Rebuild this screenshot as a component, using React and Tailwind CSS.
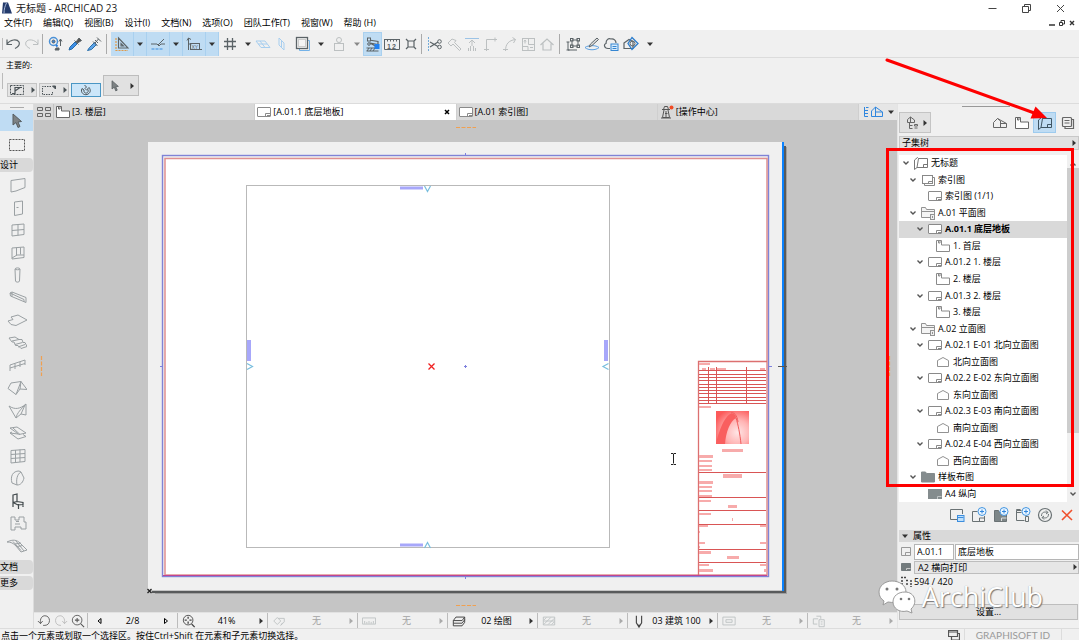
import React, { useState } from 'react';
import clsx from 'clsx';

const Svg = ({ className = 'w-4 h-4', box = '0 0 16 16', children }) => (
  <svg viewBox={box} className={clsx('shrink-0', className)} fill="none" stroke="currentColor" strokeWidth="1" aria-hidden="true">
    {children}
  </svg>
);

const Caret = ({ className = 'text-[#333]' }) => (
  <Svg className={clsx('w-2 h-2', className)} box="0 0 8 8"><path d="M1 2.5h6L4 6z" fill="currentColor" stroke="none" /></Svg>
);

const Play = ({ className = 'text-[#333]' }) => (
  <Svg className={clsx('w-2 h-2', className)} box="0 0 8 8"><path d="M2.5 1v6L6 4z" fill="currentColor" stroke="none" /></Svg>
);

const LayoutIcon = ({ className = 'text-[#8a8a8a]' }) => (
  <Svg className={clsx('w-3.5 h-3.5', className)} box="0 0 14 14">
    <rect x=".5" y="2.500" width="13" height="9" rx=".5" fill="#fff" />
    <path d="M8.500 11V8.500h5M10 10.500h3" />
  </Svg>
);

const StoryIcon = ({ className = 'text-[#8a8a8a]' }) => (
  <Svg className={clsx('w-3.5 h-3.5', className)} box="0 0 14 14">
    <path d="M.5 12.500V1.500h5V6h8v6.500z" fill="#fff" />
    <path d="M2.500 1.500v2.500h1.500V2" />
  </Svg>
);

const BookIcon = ({ className = 'text-[#777]' }) => (
  <Svg className={clsx('w-3.5 h-3.5', className)} box="0 0 14 14">
    <path d="M4.500 2.500h9v9H3M4.500 2.500L3.500 1.500.5 4v9.500l2.500-2L4.500 2.500M9.500 11V8.500h4" />
  </Svg>
);

const IndexIcon = () => (
  <Svg className="w-3.5 h-3.5 text-[#888]" box="0 0 14 14">
    <rect x="1.500" y="2.500" width="10" height="8" />
    <path d="M7.500 10V8.500h4M3.500 10.500V12.500h10V4.500h-2" />
  </Svg>
);

const FolderIcon = () => (
  <Svg className="w-3.5 h-3.5 text-[#929292]" box="0 0 14 14">
    <path d="M9 11.500H.5v-10h4l1 2h8V8" fill="#f4f4f4" />
    <path d="M.5 5.500h13" /><rect x="9.500" y="8.500" width="4" height="5" fill="#eee" /><path d="M11.500 10v2" />
  </Svg>
);

const ElevationIcon = () => (
  <Svg className="w-3.5 h-3.5 text-[#929292]" box="0 0 14 14"><path d="M1.500 11.500V5.500L7 2.500l5.500 3v6z" /></Svg>
);

const MasterFolderIcon = () => (
  <Svg className="w-3.5 h-3.5 text-[#848c8e]" box="0 0 14 14"><path d="M.5 12V2h4l1 1.500h8V12z" fill="currentColor" /></Svg>
);

const MasterIcon = () => (
  <Svg className="w-3.5 h-3.5 text-[#848c8e]" box="0 0 14 14">
    <rect x=".5" y="2.500" width="13" height="9" fill="currentColor" />
    <path d="M9.500 12V9.500h4" stroke="#c0c5c6" />
  </Svg>
);

const menus = ['文件(F)', '编辑(Q)', '视图(B)', '设计(I)', '文档(N)', '选项(O)', '团队工作(T)', '视窗(W)', '帮助 (H)'];

const toolIcons = {
  undo: <path d="M2 3.500v5h5M2 8c3-4.500 10-5.500 12-2 1.200 3-1 5-4 6.500" strokeWidth="1.200" />,
  redo: <path d="M14 3.500v5H9M14 8C11 3.500 4 2.500 2 6c-1.200 3 1 5 4 6.500" />,
  find: <><circle cx="5.500" cy="5.500" r="4" stroke="#4c91d6" strokeWidth="1.500" /><circle cx="5.500" cy="5.500" r="1.500" fill="#3686dc" /><path d="M8 9l1.500 1.500" stroke="#277bdc" strokeWidth="2" /><path d="M7 14h4v-2H8z" fill="currentColor" /><path d="M11 5.500L12.500 3 14 5.500M12.500 3v7" /></>,
  pick: <><path d="M2 14l1-3 5-5 2 2-5 5z" fill="#3f8fe6" stroke="#276da9" /><path d="M7.500 4.500l4 4M9 6l3-4 2.500 2.500L10.500 7z" fill="#555" /></>,
  inject: <><path d="M1.500 14.500l2-3 5-5 2 2-5 5z" fill="#5ea4e8" stroke="#276da9" /><path d="M7 5.500l4.500 4.500M9 7l3.500-4M11 1.500l4 4M9 4l3 3" /></>,
  grid: <path d="M5.500 2v12M10.500 2v12M2 5.500h12M2 10.500h12" strokeWidth="1.300" />,
  plane: <path d="M1 5h9l5 6.500H6zM3 8h9M5 5l5 6.500" stroke="#a7ceef" />,
  vplane: <path d="M5 2l5 5v7L5 9zM7.500 5v7" stroke="#a7ceef" />,
  page: <><path d="M4.500 4.500h10v10h-10z" stroke="#74b2e8" /><rect x="1.500" y="1.500" width="11" height="11" fill="#f4f4f4" strokeWidth="1.300" /><rect x="3.500" y="3.500" width="7" height="7" stroke="#ccc" /></>,
  lock: <><rect x="3.500" y="7.500" width="9" height="7" /><circle cx="8" cy="4" r="2.500" /><path d="M7 6.500v1M9 6.500v1" /></>,
  trace: <><path d="M4 4l9 1.500v3L5 7l7 4" strokeWidth="1.200" /><rect x="2.500" y="2" width="3" height="3" fill="#cce2f5" /><circle cx="4" cy="8" r="1.300" /><path d="M1.500 12h9M2 15l2-3M5 15l2-3M8 15l2-3M1.500 15h12" /><rect x="10" y="8.500" width="4" height="4" fill="#2180f0" stroke="#2180f0" /></>,
  ruler: <><path d="M.5 3v10.500h15V3M0 3.500h16M3.500 3v2.500M6.500 3v2.500M9.500 3v2.500M12.500 3v2.500" /><text x="3" y="12.500" fontSize="7" letterSpacing="1" fill="currentColor" stroke="none" fontFamily="Liberation Sans, sans-serif" fontWeight="700">12</text></>,
  cross: <path d="M5 5h6v6H5zM3 3l2.500 2.500M13 3l-2.500 2.500M3 13l2.500-2.500M13 13l-2.500-2.500" strokeWidth="1.200" />,
  scissors: <><circle cx="12.500" cy="5.500" r="1.800" /><circle cx="12.500" cy="11" r="1.800" /><path d="M3 6l8 4.500M3 11l8-5" strokeWidth="1.200" /><path d="M1.500 1v14" stroke="#75acd9" strokeDasharray="2 1" /></>,
  axe: <path d="M2 7l4-4 4 1.500-1.500 2L15 13l-1.500 1.500L7 8l-2 2z" />,
  adjust: <><path d="M1 2.500h14" stroke="#9cc3e6" /><path d="M8 4v6M5 7l3-3 3 3M4.500 12v3M6.500 10v5M9.500 10v5M11.500 12v3" /></>,
  corner: <path d="M1 13.500h5M3.500 15V3.500H14M12 1.500v4" />,
  fillet: <path d="M1 13.500h5M3.500 15c0-7 3-10.500 10-11.500M10.500 1.500l3 2-2 3.500" />,
  resize: <><rect x="2.500" y="2.500" width="12" height="12" /><path d="M8.500 3v5.500h6M3 10.500h5v4M5 4.500v3M4 5.500l1-1.500 1 1.500M10 11.500h3" /></>,
  house: <path d="M1.500 9L8 3l6.500 6M4 7.500V14h8V7.500" strokeWidth="1.200" />,
  group: <><path d="M3 6v8h9M7 4h6v6H7z" /><rect x="5.500" y="2.500" width="2.500" height="2.500" /><rect x="12" y="2.500" width="2.500" height="2.500" /><rect x="5.500" y="9" width="2.500" height="2.500" /><rect x="12" y="9" width="2.500" height="2.500" /><path d="M1.500 6h3M1.500 14h3" /></>,
  edit: <><path d="M1 11.500c3-2.500 11-2.500 14 0-3 3-11 3-14 0z" stroke="#5a9fe2" /><path d="M5 11l1.500-3 6.500-6 1.500 1.500L8 9.500z" fill="#ddd" /></>,
  cloud: <><path d="M7 12.500H5C1 12.500.5 8 3 7.500c0-4 2.500-5.500 5-4.500 3-.5 5 1.500 5 4" strokeWidth="1.200" /><rect x="8" y="8" width="7" height="6.500" fill="#d9ecfc" stroke="#3586d2" /><path d="M9.500 10.500h4M9.500 12.500h4" stroke="#3586d2" /></>,
  model: <><path d="M1 7l5-3.500 4 2v7H1z" strokeWidth="1.200" /><path d="M9 1.500l6 6-6 6-4-6z" stroke="#2c7dcc" strokeWidth="1.300" /><circle cx="9.500" cy="7.500" r="2.500" /></>,
  triangle: <><path d="M4.500 2v10h9.500zM7 7.500v2.500h2.500z" strokeWidth="1.100" /><path d="M2 2v12.500h12" stroke="#e09a48" strokeDasharray="2 1" strokeWidth="1.200" /></>,
  guide: <><path d="M1 8h6l2 2 2-2M8 9l6-6M11 8h4" /><path d="M1.500 13h12" stroke="#3c8de0" strokeDasharray="3 1" strokeWidth="1.200" /></>,
  coord: <><path d="M2.500 2v12M1 4.500L2.500 2 5 3.500" /><path d="M2.500 8h3" /><rect x="4.500" y="7.500" width="9" height="6" /><path d="M14 13.500h2" /><text x="5.500" y="12.500" fontSize="5" fill="currentColor" stroke="none" fontFamily="Liberation Sans, sans-serif">XY</text></>,
};

const ToolButton = ({ name, label, w = 'w-[19px]', dim, active }) => (
  <button aria-label={label || name} className={clsx('h-6 shrink-0 flex items-center justify-center', w, dim ? 'text-[#bcc0c1]' : 'text-[#5b6367]', active && 'bg-[#bfdcf3] outline outline-[#a9d0ef] -outline-offset-1')}>
    <Svg>{toolIcons[name]}</Svg>
  </button>
);

const CaretButton = ({ w, className }) => (
  <button aria-label="more" className={clsx('h-6 shrink-0 flex items-center justify-center', w)}><Caret className={className} /></button>
);

const Split = ({ name }) => (
  <div className="flex w-9 h-6 shrink-0 bg-[#bfdcf3] border-r border-[#a9d0ef]">
    <ToolButton name={name} w="w-[22px]" />
    <span className="w-px bg-[#a9d0ef]" />
    <CaretButton w="flex-1" />
  </div>
);

const Sep = () => <span className="w-px h-5 mx-px shrink-0 bg-[#aaa]" />;

const Toolbar = () => (
  <div className="flex items-center h-7 shrink-0 border-b border-[#dcdcdc] pl-0.5">
    <span className="w-px h-3 bg-[#bbb]" />
    <ToolButton name="undo" />
    <ToolButton name="redo" dim />
    <Sep />
    <div className="flex px-0.5">
      <ToolButton name="find" />
      <ToolButton name="pick" />
      <ToolButton name="inject" />
    </div>
    <Sep />
    <div className="flex pl-[3px]">
      <Split name="triangle" />
      <Split name="guide" />
      <Split name="coord" />
    </div>
    <ToolButton name="grid" w="w-[22px]" />
    <CaretButton w="w-[13px]" />
    <ToolButton name="plane" w="w-[18px]" dim />
    <ToolButton name="vplane" w="w-5" dim />
    <ToolButton name="page" w="w-[22px]" />
    <CaretButton w="w-3.5" />
    <ToolButton name="lock" w="w-[22px]" dim />
    <CaretButton w="w-[13px]" className="text-[#888]" />
    <ToolButton name="trace" active />
    <ToolButton name="ruler" />
    <ToolButton name="cross" />
    <Sep />
    <div className="flex px-0.5">
      <ToolButton name="scissors" />
      <ToolButton name="axe" dim />
      <ToolButton name="adjust" dim w="w-[18px]" />
      <ToolButton name="corner" dim />
      <ToolButton name="fillet" dim />
      <ToolButton name="resize" dim w="w-[18px]" />
      <ToolButton name="house" dim />
    </div>
    <Sep />
    <div className="flex pl-0.5">
      <ToolButton name="group" />
      <ToolButton name="edit" />
      <ToolButton name="cloud" />
      <ToolButton name="model" w="w-[22px]" />
      <CaretButton w="w-4" />
    </div>
  </div>
);

const ArrowCursor = ({ className }) => (
  <Svg className={className} box="0 0 12 16"><path d="M2 1v11l3-2.500 2 5 2-1-2-4.500 3.500-.5z" fill="#7d8284" stroke="#555c5f" /></Svg>
);

const InfoBox = () => (
  <div className="h-[46px] shrink-0 border-b border-[#dcdcdc] pl-0.5 text-[#4b5357]">
    <div className="pl-1 h-[13px] text-[8px] leading-[13px] text-black">主要的:</div>
    <div className="flex items-end gap-0.5 h-[26px]">
      <span className="w-px h-4 mb-2 mr-0.5 bg-[#bbb]" />
      <button aria-label="selection settings" className="flex items-center justify-center gap-1 w-[30px] h-3.5 bg-[#e4e4e4] border border-[#c4c4c4]">
        <Svg className="w-4 h-3" box="0 0 16 12"><rect x="1.500" y="1.500" width="13" height="9" strokeDasharray="2 1" /><path d="M3 9.500h3v-6h7M6 7l5-3.500" strokeWidth="1.200" /></Svg>
        <Play className="-mr-0.5" />
      </button>
      <button aria-label="marquee" className="flex items-center justify-center gap-1 w-[30px] h-3.5 bg-[#e4e4e4] border border-[#c4c4c4]">
        <Svg className="w-4 h-3" box="0 0 16 12"><path d="M10 2.500H1.500v8h10V7" strokeDasharray="1.500 1" /><path d="M11.500 2h3v3z" fill="currentColor" /></Svg>
        <Play className="-mr-0.5" />
      </button>
      <button aria-label="magnet" className="flex items-center justify-center w-[30px] h-3.5 bg-[#cce6f9] border border-[#4a96c4]">
        <Svg className="w-3 h-3" box="0 0 12 12"><path d="M4.500 1l2 2L5 4.500l2 2M2 4.500c-2 4 2 7 5 6s4.500-4 2-7L7.500 5c1.500 2 .5 3.500-1 4S3.500 8 4 6z" /></Svg>
      </button>
      <button aria-label="arrow tool" className="flex items-center justify-end gap-2 w-9 h-[21px] mb-px pr-0.5 bg-[#e1e1e1] border border-[#bdbdbd]">
        <ArrowCursor className="w-2.5 h-3" />
        <Play />
      </button>
    </div>
  </div>
);

// design tools, top to bottom
const designTools = [
  ['wall', <path d="M2 4.500l14-2v9l-9 3.500-5 1z" />],
  ['door', <path d="M5.500 3l8-1v13l-8 1.500zM7.500 8.500h2" />],
  ['window', <path d="M3 4l12-1v10.500l-12 1.500zM3 9.500l12-1M9 3.500v11" />],
  ['corner window', <path d="M3 4l12-1v10.500l-12 1.500zM3 14l5-3h7M7.500 3.500v8M11.500 3.500v7" />],
  ['column', <path d="M6 3c0-1.500 5-1.500 5 0l-.5 12c0 1.500-4 1.500-4 0zM6 3c0 1 5 1 5 0" />],
  ['beam', <path d="M1 4l2-1 14 5.500v5L1.500 7zM3 3v4.500M1 4l14 6.500v2.500" />],
  ['slab', <path d="M-1 10l5-1.500L2 6l7-2 9 5-11 5.500-5-1z" />],
  ['stair', <path d="M0 4l6-1 4 2.500h3l1 3h2l2 4-6 2-3-3H6.500L5 8H3zM3 7l7-1.500M6 10.500l7.500-2M9 13l7-2.500" />],
  ['railing', <path d="M1 8l15-5v5M1 8v6M1 11l15-4.500M6 6.500v5.500M11 5v5" />],
  ['roof', <path d="M2 4l10-1.500 6 8-7-.5-4 5.500-8-6zM7 15.500l5-13M12 2.500l-1 7.500" />],
  ['shell', <path d="M0 4c6 4 11 3 17-2v11l-5-1-5 4zM7 16c1-5 5-9 10-14M12 12l4-9" />],
  ['skylight', <path d="M1 4l7-1 9 6-7 1.500zM3 8l-2 1 8 6 8-2.500-3-2M4 4l7 6.500M1 9l8 1" />],
  ['curtain wall', <path d="M2 3.500l14-1v12L2 16zM6.500 3v12.500M11 2.500v12.500M2 7.500l14-1M2 11.500l14-1" />],
  ['morph', <path d="M10 2c-6 0-9 5-7 12l5 2c4 0 6-3 7-7l-3-6zM8 16C7 11 8 5 12 3" />],
];

const lowerTools = [
  ['object', true, <path d="M4 3l4-1v7.500L4 10.500zM4 10.500l4-1 6 1v2l-5 .5-5-2.500M4 10v5M14 12v3M9.500 12v5" strokeWidth="1.200" />],
  ['zone', false, <path d="M2 3h4v3h4V3h5v5h2v7h-5v-2H6v3H2zM6 10h5M7 7.500h3" />],
  ['mesh', false, <path d="M-2 5c6-3 10-2 13 1l7 7-6 2-5-6C4 6 2 5-2 5zM4 4.500l8 9M7 4l8 10M8 9.500l6-1M6 7l6-1" />],
];

const ToolHeader = ({ children }) => (
  <button className="block w-full h-3.5 shrink-0 text-left rounded-r-sm bg-[#d9d9d9]">{children}</button>
);

const Toolbox = () => (
  <div className="w-[34px] shrink-0 flex flex-col border-r border-[#dcdcdc] text-[#9aa0a3]">
    <div className="h-[6px] shrink-0 flex items-center justify-center"><span className="w-3.5 h-px bg-[#aaa]" /></div>
    <button aria-label="arrow" className="h-[21px] shrink-0 flex items-center justify-center bg-[#bfdcf3]"><ArrowCursor className="w-3 h-4" /></button>
    <button aria-label="marquee" className="h-[27px] shrink-0 flex items-center justify-center text-[#555]">
      <Svg className="w-4 h-3" box="0 0 16 12"><rect x=".5" y=".5" width="15" height="11" strokeDasharray="2 1" /></Svg>
    </button>
    <div className="text-black flex"><ToolHeader>设计</ToolHeader></div>
    <div className="flex flex-col h-[387px] shrink-0 py-0.5">
      {designTools.map(([name, art]) => (
        <button key={name} aria-label={name} className="flex-1 flex items-center justify-center"><Svg className="w-5 h-[18px]" box="-2 0 20 18">{art}</Svg></button>
      ))}
      {lowerTools.map(([name, dark, art]) => (
        <button key={name} aria-label={name} className={clsx('flex-1 flex items-center justify-center', dark && 'text-[#3f474a]')}><Svg className="w-5 h-[18px]" box="-2 0 20 18">{art}</Svg></button>
      ))}
    </div>
    <div className="flex flex-col gap-0.5 pt-px text-black">
      <ToolHeader>文档</ToolHeader>
      <ToolHeader>更多</ToolHeader>
    </div>
  </div>
);

const Tabs = () => {
  const tabs = [
    { text: '[3. 楼层]', icon: <StoryIcon className="text-[#666]" /> },
    { text: '[A.01.1 底层地板]', icon: <LayoutIcon />, active: true },
    { text: '[A.01 索引图]', icon: <LayoutIcon /> },
    {
      text: '[操作中心]',
      icon: (
        <Svg className="w-3.5 h-3.5 text-[#555]" box="0 0 14 14">
          <path d="M3.500 4.500L4.500 1.500h3l1 3M2 4.500h8M4 5L2.500 12.500h7L8 5M5 8.500h2.500M6 6v6M1 13h10" />
          <circle cx="11.500" cy="2.500" r="2" fill="#f04a23" stroke="none" />
        </Svg>
      ),
    },
  ];
  return (
    <div className="flex h-4 shrink-0 bg-[#d9d9d9]">
      <button aria-label="all tabs" className="w-5 flex items-center justify-center border-r border-[#c2c2c2] text-[#666]">
        <Svg className="w-3.5 h-3.5" box="0 0 14 14"><path d="M.5 2.500h5v3h-5zM8.500 2.500h5v3h-5zM.5 8.500h5v3h-5zM8.500 8.500h5v3h-5z" /></Svg>
      </button>
      {tabs.map(t => (
        <div key={t.text} className={clsx('flex-1 flex items-center border-r border-[#cfcfcf] pl-0.5 pr-1.5', t.active && 'bg-white')}>
          <button className="flex items-center gap-0.5">{t.icon}{t.text}</button>
          {t.active && <button aria-label="close tab" className="ml-auto"><Svg className="w-1.5 h-1.5" box="0 0 6 6"><path d="M1 1l4 4M5 1L1 5" strokeWidth="1.500" /></Svg></button>}
        </div>
      ))}
      <button aria-label="view map" className="w-[38px] flex items-center justify-between bg-[#e6e6e6] pl-1 pr-0.5 text-[#2f86de]">
        <Svg className="w-5 h-3.5" box="0 0 20 14"><path d="M1.500 2v9.500H5M1.500 5.500H5M1.500 8.500H5M3 2.500h2.500M8.500 11.500V6L12.500 2l7 5v4.500zM12.500 2v9.500M12.500 7h7" /></Svg>
        <Caret />
      </button>
    </div>
  );
};

const tableLines = [370, 374, 377, 380, 384, 387, 390, 393, 397, 400];
const blockLines = [403, 472, 497, 510, 524, 549, 562];
// [x, y, width, height]
const labels = [
  [699, 363, 11, 2], [702, 368, 4, 2], [710, 368, 5, 2], [717, 368, 9, 2], [760, 368, 5, 2],
  [699, 406, 12, 2], [722, 449, 21, 3], [699, 455, 14, 3], [699, 460, 13, 2], [699, 465, 13, 2], [699, 469, 13, 2],
  [723, 474, 19, 4], [699, 481, 14, 3], [699, 486, 13, 2], [699, 490, 13, 2], [699, 495, 13, 2],
  [699, 500, 12, 2], [728, 505, 9, 3], [699, 513, 12, 2], [732, 518, 1, 3], [699, 525, 9, 2], [760, 525, 6, 2],
  [699, 531, 1, 2], [699, 542, 6, 2], [760, 542, 6, 2], [699, 546, 1, 2], [699, 551, 12, 3], [727, 556, 12, 3],
  [699, 564, 10, 2], [760, 564, 6, 2], [699, 569, 14, 3], [764, 569, 2, 3],
];

const Drawing = () => (
  <svg viewBox="34 120 863 492" preserveAspectRatio="xMidYMid meet" className="block w-full h-full" fill="none" role="img" aria-label="layout sheet">
    <defs>
      <radialGradient id="logo" cx="65%" cy="65%" r="75%">
        <stop offset="0" stopColor="#ffe6e6" /><stop offset=".5" stopColor="#ffb4b4" /><stop offset="1" stopColor="#fc5a5a" />
      </radialGradient>
    </defs>
    <path d="M784 146h2v447H152v-2h632z" fill="#585a5b" />
    <path d="M786 147h1v447H155v-1h631z" fill="#a0a0a0" />
    <rect x="148" y="142" width="635" height="448" fill="#f0f0f0" />
    <rect x="782" y="142" width="2" height="449" fill="#0a82ff" />
    <rect x="162.500" y="155.500" width="606" height="421" stroke="#8083d6" strokeWidth="1.400" />
    <rect x="165" y="158.500" width="602" height="416.500" fill="#fff" stroke="#e09090" strokeWidth="1.500" />
    <path d="M163 575.500h604" stroke="#c04594" strokeWidth="1.200" />
    <rect x="246.500" y="185.500" width="363" height="362" stroke="#b9b9b9" />
    <g fill="#a7a7fa">
      <path d="M400 186.500h23v3h-23zM400 543.500h23v3h-23zM247 340h4v21h-4zM604 340h4v21h-4z" />
    </g>
    <path d="M424.500 186l3 5.500 3-5.500M424.500 548l3-5.500 3 5.500M247 363.500l5.500 3-5.500 3M608.500 363.500l-5.500 3 5.500 3" stroke="#78bede" strokeWidth="1.200" />
    <path d="M428.500 363.500l6 6M434.500 363.500l-6 6" stroke="#f02020" strokeWidth="1.300" />
    <path d="M464 366.500h3M465.500 365v3M465.500 153v3M465.500 577v2M160 366.500h3M769 366.500h3" stroke="#7d80dd" />
    <path d="M778 366.500h9" stroke="#555" />
    <path d="M147.500 589l4 4M151.500 589l-4 4" stroke="#222" strokeWidth="1.300" />
    <path d="M41.500 356v20M889.500 356v20M456 127.500h20M456 605.500h20" stroke="#f0a050" strokeWidth="1.200" strokeDasharray="4 1.500" />
    <path d="M671 453.500h2l.5.500.5-.5h2M673.500 454v9.500M671 464.500h2l.5-.5.5.5h2" stroke="#222" />

    {/* title block */}
    <g stroke="#d95555">
      <path d="M698.500 575V361.500H767" stroke="#dc7070" strokeWidth="1.300" />
      {tableLines.map(y => <path key={y} d={`M699 ${y + 0.5}h67`} />)}
      {blockLines.map(y => <path key={y} d={`M699 ${y + 0.5}h67`} />)}
      <path d="M708.500 367v36M716.500 367v36M746.500 367v36" />
    </g>
    {labels.map(([x, y, w, h]) => <rect key={`${x}-${y}`} x={x} y={y} width={w} height={h} fill="#f7abab" />)}
    <rect x="716" y="411" width="33" height="33" fill="url(#logo)" />
    <path d="M716 444c3-14 8-26 14-30 4-1 6 1 6 4-6 3-10 14-11 26z" fill="#f95f5f" />
    <path d="M736 418c2 6 4 16 5 26M731 413c3-1 6 2 7 9" stroke="#f05a5a" />
  </svg>
);

const statusIcons = {
  zoom: <><path d="M11 11.500l3.500 3.500" strokeWidth="1.500" /><circle cx="7" cy="7" r="5.500" /><path d="M7 3v2.500M7 8.500v2.500M3 7h2.500M8.500 7h2.500" strokeWidth="1.500" /></>,
  turn: <path d="M2 8l4-4 4 4-4 4zM7 5h7v4l-4 4M12 10l-2 3" />,
  scale: <path d="M.5 4.500h15v7H.5zM3 8v3M5.500 9v2M8 8v3M10.500 9v2M13 8v3" />,
  layer: <path d="M4.500 3.500h10l-3 4h-10zM1.500 7.500v3h10l3-4M1.500 10.500v3h10l3-4M14.500 3.500v6" strokeWidth="1.100" />,
  hatch: <path d="M1.500 3.500h13v9h-13zM2 7l3-3M2 12l8-8M7 12l7-7M11 12l3-3M2 8h12" />,
  pen: <path d="M5 2v8l3 5 3-5V2M8 12v3" strokeWidth="1.300" />,
  frame: <path d="M1 3.500h14v9H1zM4.500 6.500h7v3h-7z" />,
  reno: <path d="M6 11.500H1.500v-6H7M5 2.500h5v3M8 6.500h6v8H8zM10 9h2M10 11.500h2" />,
};

const QuickOption = ({ icon, value, off }) => (
  <button className={clsx('min-w-0 flex items-center border-l border-[#bcbcbc] pl-1 pr-0.5', off ? 'text-[#a3a3a3]' : 'text-black')}>
    <Svg className={clsx('w-3.5 h-3.5', off ? 'text-[#bcc0c1]' : 'text-[#444]')}>{statusIcons[icon]}</Svg>
    <span className="flex-1 text-center whitespace-nowrap">{value}</span>
    <Play className={off ? 'text-[#aaa]' : 'text-[#333]'} />
  </button>
);

const QuickBar = () => (
  <div className="grid grid-cols-[53px_repeat(9,minmax(0,1fr))] h-4 shrink-0 border-t border-[#e2e2e2]">
    <div className="flex items-center justify-around px-px text-[#555]">
      <button aria-label="previous view"><Svg className="w-3.5 h-3.5"><path d="M1 8l3 3 2.500-3M4 11C3 5 6 2 9 2c7 0 7 11 0 11H7" /></Svg></button>
      <button aria-label="next view" className="text-[#bbb]"><Svg className="w-3.5 h-3.5"><path d="M15 8l-3 3-2.500-3M12 11c1-6-2-9-5-9-7 0-7 11 0 11h1" /></Svg></button>
      <button aria-label="zoom in"><Svg className="w-3.5 h-3.5"><circle cx="7" cy="7" r="5.500" /><path d="M11 11l4 4M7 4.500v5M4.500 7h5" strokeWidth="1.200" /></Svg></button>
    </div>
    <div className="flex items-center justify-between border-l border-[#bcbcbc] px-[7px]">
      <button aria-label="previous layout"><Svg className="w-2 h-2" box="0 0 8 8"><path d="M6 1.500v5L3 4z" /></Svg></button>
      <span>2/8</span>
      <button aria-label="next layout"><Svg className="w-2 h-2" box="0 0 8 8"><path d="M2.500 1.500v5l3-2.500z" /></Svg></button>
    </div>
    <QuickOption icon="zoom" value="41%" />
    <QuickOption icon="turn" value="无" off />
    <QuickOption icon="scale" value="无" off />
    <QuickOption icon="layer" value="02 绘图" />
    <QuickOption icon="hatch" value="无" off />
    <QuickOption icon="pen" value="03 建筑 100" />
    <QuickOption icon="frame" value="无" off />
    <QuickOption icon="reno" value="无" off />
  </div>
);

const tree = [
  { level: 0, open: true, icon: <BookIcon />, text: '无标题' },
  { level: 1, open: true, icon: <IndexIcon />, text: '索引图' },
  { level: 2, icon: <LayoutIcon />, text: '索引图 (1/1)' },
  { level: 1, open: true, icon: <FolderIcon />, text: 'A.01 平面图' },
  { level: 2, open: true, icon: <LayoutIcon />, text: 'A.01.1 底层地板' },
  { level: 3, icon: <StoryIcon />, text: '1. 首层' },
  { level: 2, open: true, icon: <LayoutIcon />, text: 'A.01.2 1. 楼层' },
  { level: 3, icon: <StoryIcon />, text: '2. 楼层' },
  { level: 2, open: true, icon: <LayoutIcon />, text: 'A.01.3 2. 楼层' },
  { level: 3, icon: <StoryIcon />, text: '3. 楼层' },
  { level: 1, open: true, icon: <FolderIcon />, text: 'A.02 立面图' },
  { level: 2, open: true, icon: <LayoutIcon />, text: 'A.02.1 E-01 北向立面图' },
  { level: 3, icon: <ElevationIcon />, text: '北向立面图' },
  { level: 2, open: true, icon: <LayoutIcon />, text: 'A.02.2 E-02 东向立面图' },
  { level: 3, icon: <ElevationIcon />, text: '东向立面图' },
  { level: 2, open: true, icon: <LayoutIcon />, text: 'A.02.3 E-03 南向立面图' },
  { level: 3, icon: <ElevationIcon />, text: '南向立面图' },
  { level: 2, open: true, icon: <LayoutIcon />, text: 'A.02.4 E-04 西向立面图' },
  { level: 3, icon: <ElevationIcon />, text: '西向立面图' },
  { level: 1, open: true, icon: <MasterFolderIcon />, text: '样板布图' },
  { level: 2, icon: <MasterIcon />, text: 'A4 纵向' },
];

const indent = ['pl-[3px]', 'pl-[10px]', 'pl-[17px]', 'pl-[25px]'];

const Chevron = ({ up }) => (
  <Svg className="w-2 h-2 text-[#555]" box="0 0 8 8"><path d={up ? 'M1.500 5.500L4 3l2.500 2.500' : 'M1.500 2.500L4 5l2.500-2.500'} strokeWidth="1.400" /></Svg>
);

const Tree = () => {
  const [selected, setSelected] = useState('A.01.1 底层地板');
  return (
    <div className="flex h-[347px] shrink-0">
      <div className="flex-1 min-w-0 flex flex-col bg-white">
        {tree.map(row => (
          <button
            key={row.text}
            onClick={() => setSelected(row.text)}
            className={clsx('flex-1 min-h-0 flex items-center text-left whitespace-nowrap', indent[row.level], selected === row.text && 'bg-[#d9d9d9] font-bold')}
          >
            <span className="w-3 flex">{row.open && <Chevron />}</span>
            {row.icon}
            <span className="pl-[3px]">{row.text}</span>
          </button>
        ))}
      </div>
      <div className="w-3 flex flex-col items-center bg-[#f0f0f0]">
        <div className="h-[13px] flex items-end"><Chevron up /></div>
        <div className="w-full h-[265px] bg-[#cdcdcd]" />
        <div className="mt-auto mb-1"><Chevron /></div>
      </div>
    </div>
  );
};

const Plus = () => (
  <><circle cx="11" cy="4.500" r="4" fill="#eaf5ff" stroke="#4596e0" /><path d="M11 2.500v4M9 4.500h4" stroke="#2f86de" /></>
);

const treeActions = [
  ['new layout view', <><path d="M8 12.500H1.500v-10h12V7" /><rect x="8.500" y="8.500" width="6.500" height="6" fill="#bfe0fb" stroke="#3d8ede" /><path d="M8.500 10.500h6" stroke="#3d8ede" /></>],
  ['new layout', <><path d="M6.500 4.500h-5v10h12V9M8.500 14v-3h5" /><Plus /></>],
  ['new master', <><path d="M1.500 14.500v-11h4l1 2h7v9z" fill="#7d8688" /><path d="M8.500 14v-3h5" stroke="#ddd" /><Plus /></>],
  ['new subset', <><path d="M6.500 3.500h-5v10h8M1.500 5.500h5M10.500 9.500h3v5h-3z" /><path d="M1.500 3.500v-1h4" /><Plus /></>],
  ['refresh', <><circle cx="8" cy="8" r="6.500" strokeWidth="1.200" /><path d="M4.500 9c0-4 3-4.500 6-3.500M9 3.500l2 2-2 1.500M11.500 7c0 4-3 4.500-6 3.500M7 12.500l-2-2L7 9" /></>],
  ['delete', <path d="M3 3.500l10 9.500M13 3L3 13" stroke="#f0502c" strokeWidth="1.600" />],
];

const Navigator = () => (
  <div className="w-[182px] shrink-0 flex flex-col pl-px border-l border-[#e4e4e4]">
    <div className="h-[5px] shrink-0 flex items-center justify-center pr-1.5"><span className="w-12 h-px bg-[#999]" /></div>
    <div className="h-[27px] shrink-0 flex items-center text-[#666]">
      <button aria-label="project chooser" className="w-8 h-[21px] flex items-center justify-between pl-1.5 pr-px bg-[#e1e1e1] border border-[#c4c4c4]">
        <Svg className="w-3.5 h-3.5" box="0 0 14 14"><path d="M1.500 6.500v-3l3-2.500 4 3v2.500zM4.500 1v5.500M3.500 7v5.500h3M3.500 9.500h3M8.500 8.500h3v1.500h-3zM8.500 12h3" /></Svg>
        <Play />
      </button>
      <div className="ml-auto flex items-center">
        <button aria-label="project map" className="w-[23px] h-[21px] flex items-center justify-center"><Svg><path d="M1.500 12.500V7.500l4-4 9 5v4zM5.500 3.500l3 2.500v6.500M8.500 8.500h6" /></Svg></button>
        <button aria-label="view map" className="w-[22px] h-[21px] flex items-center justify-center"><StoryIcon className="text-[#666]" /></button>
        <button aria-label="layout book" className="w-[23px] h-[21px] flex items-center justify-center bg-[#bfdcf3] border border-[#9ecbee]"><BookIcon className="text-[#3f5563]" /></button>
        <button aria-label="publisher sets" className="w-[23px] h-[21px] flex items-center justify-center"><Svg><rect x="2.500" y="2.500" width="9" height="9" rx="1" strokeWidth="1.200" /><path d="M4.500 5.500h5M4.500 8h5M5 11.500v2H13.500V4.500H11.500" strokeWidth="1.200" /></Svg></button>
      </div>
    </div>
    <button className="h-3.5 shrink-0 flex items-center justify-between pl-0.5 bg-[#e1e1e1] border border-[#c8c8c8]">子集树<Play /></button>
    <div className="h-[5px] shrink-0" />
    <Tree />
    <div className="h-[28px] shrink-0 flex items-center justify-end pr-px pb-0.5 text-[#6a7274]">
      {treeActions.map(([name, art]) => (
        <button key={name} aria-label={name} className="w-[22px] h-5 flex items-center justify-center"><Svg>{art}</Svg></button>
      ))}
    </div>
    <button className="h-3 shrink-0 flex items-center gap-1 pl-0.5 bg-[#d9d9d9] leading-3"><Caret />属性</button>
    <div className="h-[18px] shrink-0 flex items-center gap-px pt-px">
      <Svg className="w-3.5 h-3 text-[#999]" box="0 0 14 12"><path d="M2.500 1.500h9v8h-9zM6.500 9V6.500h5" /></Svg>
      <input aria-label="layout id" defaultValue="A.01.1" className="w-10 h-4 px-0.5 bg-white border border-[#b5b5b5]" />
      <input aria-label="layout name" defaultValue="底层地板" className="flex-1 min-w-0 h-4 px-0.5 bg-white border border-[#b5b5b5]" />
    </div>
    <div className="h-3.5 shrink-0 flex items-center gap-px">
      <Svg className="w-3.5 h-3 text-[#737b7d]" box="0 0 14 12"><path d="M2.500 2.500h9v7h-9z" fill="currentColor" /><path d="M7.500 9V7.500h4" stroke="#ccc" /></Svg>
      <div className="relative flex-1 flex">
        <select aria-label="master layout" className="flex-1 h-[13px] pl-[3px] appearance-none leading-[11px] bg-[#e6e6e6] border border-[#bdbdbd]">
          <option>A2 横向打印</option>
        </select>
        <span className="absolute right-0 top-0.5"><Play /></span>
      </div>
    </div>
    <div className="h-4 shrink-0 flex items-center gap-px">
      <Svg className="w-3.5 h-3.5 text-[#444]" box="0 0 14 14"><path d="M2 2.500h6M3 5v5M7 5.500h2M7 9h2M12 5v7" strokeDasharray="2 1" strokeWidth="1.500" /></Svg>
      594 / 420
    </div>
    <button className="mt-auto mb-2 mr-px h-4 shrink-0 bg-[#e1e1e1] border border-[#bdbdbd] leading-3">设置...</button>
  </div>
);

const Header = () => (
  <header className="bg-white shrink-0">
    <div className="flex items-center h-4 pl-0.5">
      <Svg className="w-2.5 h-3" box="0 0 10 12">
        <path d="M0 11.500L1 .5h5l4 11z" fill="#243b6c" stroke="none" /><path d="M2 11.500C2 7 3 4 4.500 1" stroke="#a9b8d6" />
      </Svg>
      <h1 className="pl-1 text-[10px] text-[#222]">无标题 - ARCHICAD 23</h1>
      <div className="ml-auto flex gap-[25px] pr-3.5 text-[#444]">
        <button aria-label="minimize"><Svg className="w-[9px] h-[9px]" box="0 0 9 9"><path d="M.5 4.500h8" /></Svg></button>
        <button aria-label="restore"><Svg className="w-[9px] h-[9px]" box="0 0 9 9"><path d="M.5 2.500h6v6h-6zM2.500 2V.5h6v6H7" /></Svg></button>
        <button aria-label="close"><Svg className="w-[9px] h-[9px]" box="0 0 9 9"><path d="M1 1l7 7M8 1L1 8" /></Svg></button>
      </div>
    </div>
    <nav className="flex items-center h-3.5 pl-1 gap-[11px]">
      {menus.map(m => <button key={m} className="leading-3.5">{m}</button>)}
      <div className="ml-auto flex gap-1 pr-1 text-[#333]">
        <button aria-label="minimize window"><Svg className="w-1.5 h-1.5" box="0 0 6 6"><path d="M0 5h6" strokeWidth="1.500" /></Svg></button>
        <button aria-label="restore window"><Svg className="w-1.5 h-1.5" box="0 0 6 6"><path d="M.5 2.500h3v3h-3zM2 2V.5h3.500V4H4" /></Svg></button>
        <button aria-label="close window"><Svg className="w-1.5 h-1.5" box="0 0 6 6"><path d="M1 1l4 4M5 1L1 5" strokeWidth="1.400" /></Svg></button>
      </div>
    </nav>
  </header>
);

const Watermark = () => (
  <div className="absolute right-9 bottom-6 flex items-start gap-1 pointer-events-none">
    <svg viewBox="0 0 40 34" className="w-10 h-[38px]" fill="#fff" stroke="#9a9a9a" strokeWidth="1">
      <path d="M14 1C7 1 1 6 1 12c0 4 2 7 5 9l-1 4 5-3c10 2 18-3 18-10S21 1 14 1z" />
      <path d="M27 12c-7 0-12 4-12 10s6 11 14 9l5 2-1-4c7-6 4-17-6-17z" />
      <g fill="#777" stroke="none"><circle cx="9" cy="9" r="1.500" /><circle cx="19" cy="9" r="1.500" /><circle cx="23" cy="19" r="1.300" /><circle cx="31" cy="19" r="1.300" /></g>
    </svg>
    <span className="text-[27px] leading-[38px] text-white [text-shadow:1px_1px_1px_#777,0_0_1px_#999]">ArchiClub</span>
  </div>
);

// red frame and pointer over the layout book
const Callout = () => (
  <svg viewBox="0 0 200 440" className="absolute right-0 top-[50px] w-[200px] h-[440px] pointer-events-none" fill="none" stroke="#fe0000" aria-hidden="true">
    <path d="M8 10l150 54" strokeWidth="3" strokeLinecap="round" />
    <path d="M168 68l-16.500.5 5-12z" fill="#fe0000" stroke="none" />
    <rect x="8.500" y="99.500" width="185" height="336" strokeWidth="3" />
  </svg>
);

const App = () => (
  <div className="relative flex flex-col h-screen overflow-hidden bg-[#f0f0f0] text-black text-[9px] leading-3.5 font-['Open_Sans','Noto_Sans_CJK_SC',sans-serif]">
    <Header />
    <Toolbar />
    <InfoBox />
    <main className="flex flex-1 min-h-0">
      <Toolbox />
      <section className="flex-1 min-w-0 flex flex-col">
        <Tabs />
        <div className="flex-1 min-h-0 bg-[#c5c5c5]"><Drawing /></div>
        <QuickBar />
      </section>
      <Navigator />
    </main>
    <footer className="flex h-3 shrink-0 border-t border-[#dcdcdc] pl-px">
      <p className="leading-3.5 whitespace-nowrap">点击一个元素或划取一个选择区。按住Ctrl+Shift 在元素和子元素切换选择。</p>
      <div className="ml-auto flex text-[#9a9a9a]">
        <button aria-label="windows" className="w-4 text-[#555]"><Svg className="w-3 h-3" box="0 0 12 12"><path d="M.5 1.500h9v6h-9zM3.500 8v3h8V4.500H9.500M.5 3h9" strokeWidth="1.200" /></Svg></button>
        <a href="#graphisoft-id" className="w-[98px] border-x border-[#dcdcdc] text-center text-[10px] leading-3 whitespace-nowrap font-['Lato',sans-serif]">GRAPHISOFT ID</a>
        <span className="w-[17px]" />
      </div>
    </footer>
    <Callout />
    <Watermark />
  </div>
);

export default App;
